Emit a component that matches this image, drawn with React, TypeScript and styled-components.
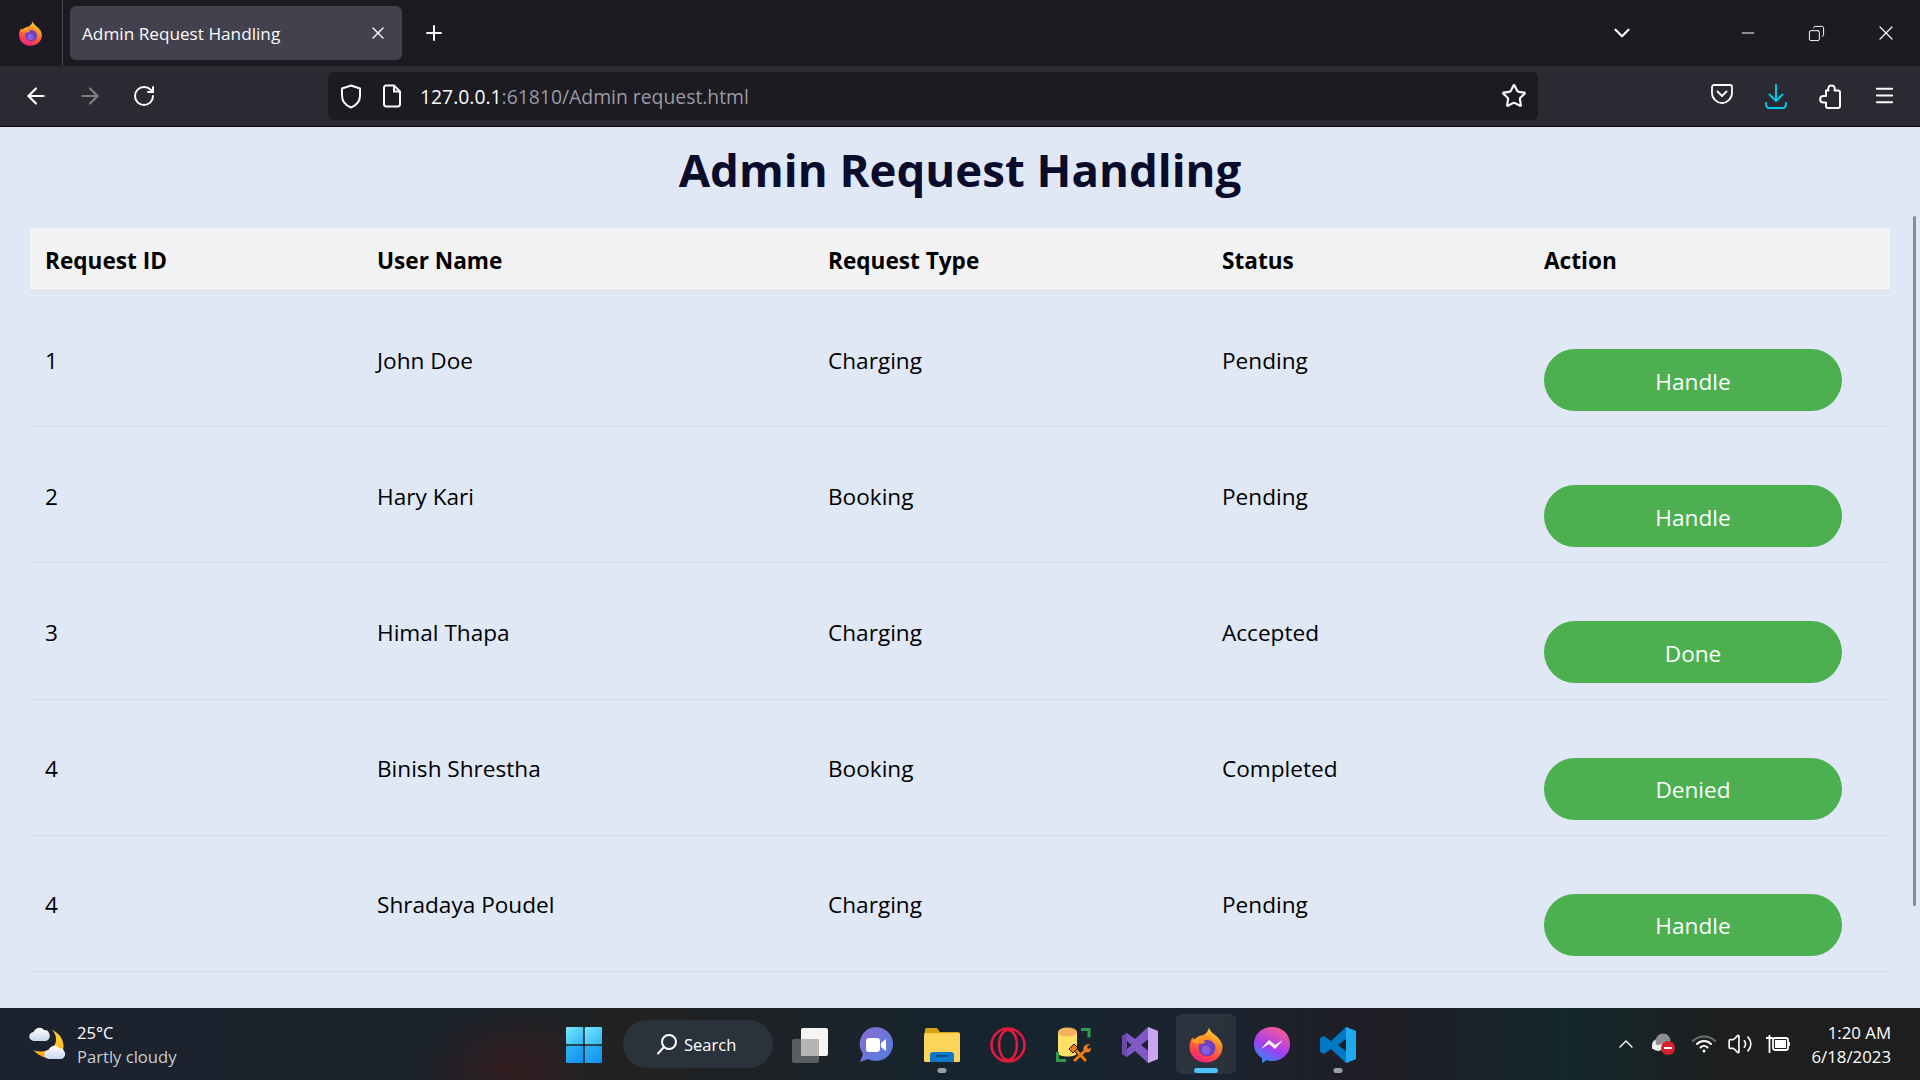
import React from 'react';
import styled, { createGlobalStyle } from 'styled-components';
import {
  ArrowLeft,
  ArrowRight,
  ChevronDown,
  ChevronUp,
  Copy,
  Menu,
  Minus,
  Plus,
  RotateCw,
  Star,
  Volume2,
  X,
} from 'lucide-react';

const GlobalStyle = createGlobalStyle`
  html, body {
    margin: 0;
    padding: 0;
    height: 100%;
    overflow: hidden;
    font-family: "Open Sans", "Noto Sans", sans-serif;
  }
  * { box-sizing: border-box; }
`;

const Screen = styled.div`
  width: 1920px;
  height: 1080px;
  display: flex;
  flex-direction: column;
  overflow: hidden;
  position: relative;
`;

/* browser chrome */
const TabBar = styled.div`
  height: 66px;
  background: #1c1b22;
  display: flex;
  align-items: center;
  color: #fbfbfe;
`;

const FoxSlot = styled.div`
  width: 63px;
  height: 66px;
  display: flex;
  align-items: center;
  padding-left: 18px;
  border-right: 1px solid #4a4a52;
`;

const Tab = styled.div`
  width: 332px;
  height: 54px;
  margin-left: 7px;
  background: #42414d;
  border-radius: 6px;
  display: flex;
  align-items: center;
  justify-content: space-between;
  padding: 0 14px 0 12px;
  font-size: 17.2px;
`;

const NewTab = styled.div`
  width: 24px;
  margin-left: 20px;
  display: flex;
`;

const WindowControls = styled.div`
  margin-left: auto;
  display: flex;
  align-items: center;
`;

const ControlSlot = styled.div<{ $w: number; $ml?: number }>`
  width: ${p => p.$w}px;
  margin-left: ${p => p.$ml ?? 0}px;
  display: flex;
  justify-content: center;
`;

const RestoreIcon = styled(Copy)`
  transform: scaleX(-1);
`;

const NavBar = styled.div`
  height: 61px;
  background: #2b2a33;
  border-bottom: 1px solid #0c0c0d;
  display: flex;
  align-items: center;
  color: #fbfbfe;
  padding-left: 9px;
`;

const NavButton = styled.div<{ $dim?: boolean }>`
  width: 54px;
  display: flex;
  justify-content: center;
  opacity: ${p => (p.$dim ? 0.4 : 1)};
`;

const UrlBar = styled.div`
  width: 1210px;
  height: 48px;
  margin-left: 157px;
  background: #1c1b22;
  border-radius: 6px;
  display: flex;
  align-items: center;
  padding: 0 11px 0 12px;
`;

const UrlIcon = styled.div`
  display: flex;
  margin-right: 21px;
`;

const UrlText = styled.div`
  font-size: 19.35px;
  color: #fbfbfe;
  margin-left: -3px;
  flex: 1;
  span { color: #9a9aa2; }
`;

const ToolButtons = styled.div`
  display: flex;
  margin-left: 157px;
`;

/* page */
const Page = styled.main`
  flex: 1;
  background: #dfe8f4;
  padding: 0 30px;
  color: #000;
`;

const Title = styled.h1`
  margin: 0;
  height: 101px;
  padding-top: 9px;
  text-align: center;
  font-size: 45.6px;
  line-height: 66px;
  font-weight: 700;
  color: #0b0b2b;
`;

const HeaderRow = styled.div`
  display: grid;
  grid-template-columns: 332px 451px 394px 322px 1fr;
  height: 63px;
  padding-top: 2px;
  align-items: center;
  background: #f2f2f2;
  border-bottom: 1px solid #dcdcdc;
  font-size: 22.6px;
  font-weight: 700;
`;

const HeaderCell = styled.div`
  padding-left: 15px;
`;

const Row = styled.div`
  display: grid;
  grid-template-columns: 332px 451px 394px 322px 1fr;
  height: 136.2px;
  border-bottom: 1px solid #d9dde2;
  font-size: 22.6px;
`;

const Cell = styled.div`
  padding: 53.5px 0 0 15px;
  line-height: 32px;
`;

const ActionCell = styled.div`
  padding: 58px 0 0 15px;
`;

const ActionButton = styled.button`
  width: 298px;
  height: 62px;
  border: 0;
  border-radius: 31px;
  background: #4caf50;
  color: #fff;
  font: inherit;
  padding: 2px 0 0;
`;

const ScrollThumb = styled.div`
  position: absolute;
  right: 4px;
  top: 216px;
  width: 3px;
  height: 690px;
  border-radius: 2px;
  background: #8a8d93;
`;

/* taskbar */
const Taskbar = styled.footer`
  height: 72px;
  display: flex;
  align-items: center;
  color: #fff;
  background:
    radial-gradient(ellipse 90px 60px at 510px 60px, rgba(80, 25, 25, 0.45), transparent),
    linear-gradient(90deg, #1c2230 0%, #1b2229 25%, #222222 33%, #16242e 50%, #1a2430 62%, #1f1d25 72%, #14282b 82%, #1e1e1e 90%);
`;

const Weather = styled.div`
  width: 551px;
  display: flex;
  align-items: center;
  padding-left: 29px;
  gap: 10px;
`;

const WeatherText = styled.div`
  font-size: 16.6px;
  line-height: 24px;
  padding-top: 2px;
  div + div { color: #c9ccd0; }
`;

const Slot = styled.div<{ $active?: boolean }>`
  width: 60px;
  height: 60px;
  margin: 0 3px;
  padding-top: 2px;
  border-radius: 6px;
  display: flex;
  align-items: center;
  justify-content: center;
  position: relative;
  background: ${p => (p.$active ? 'rgba(255,255,255,0.07)' : 'transparent')};
`;

const RunDot = styled.div<{ $active?: boolean }>`
  position: absolute;
  bottom: 1px;
  left: 50%;
  transform: translateX(-50%);
  width: ${p => (p.$active ? 24 : 9)}px;
  height: 5px;
  border-radius: 3px;
  background: ${p => (p.$active ? '#4cc2ff' : '#9b9ea3')};
`;

const SearchPill = styled.div`
  width: 150px;
  height: 48px;
  margin: 0 4px 0 6px;
  border-radius: 24px;
  background: #2a323c;
  display: flex;
  align-items: center;
  padding-left: 33px;
  gap: 6px;
  font-size: 16.5px;
`;

const Tray = styled.div`
  margin-left: auto;
  display: flex;
  align-items: center;
  padding-right: 29px;
`;

const TrayIcon = styled.div<{ $w: number }>`
  width: ${p => p.$w}px;
  display: flex;
  justify-content: center;
`;

const Clock = styled.div`
  margin-left: 10px;
  padding-top: 1px;
  text-align: right;
  font-size: 16.8px;
  line-height: 24px;
`;

const FirefoxLogo = ({ size }: { size: number }) => (
  <svg width={size} height={size} viewBox="0 0 36 36">
    <defs>
      <linearGradient id={`ffBody${size}`} x1="0.75" y1="0" x2="0.35" y2="1">
        <stop offset="0" stopColor="#ffd93b" />
        <stop offset="0.4" stopColor="#ff8a24" />
        <stop offset="0.8" stopColor="#ff3d4f" />
        <stop offset="1" stopColor="#f0218a" />
      </linearGradient>
      <linearGradient id={`ffTail${size}`} x1="0" y1="0" x2="1" y2="0.5">
        <stop offset="0" stopColor="#ffb52e" />
        <stop offset="1" stopColor="#ff7a1e" />
      </linearGradient>
    </defs>
    <path
      d="M21 0.500c.5 3 3 5 6 7.500 4.500 3.500 7.500 8 7.500 12 0 9-7.500 15.500-16.500 15.500S1.500 29 1.500 20c0-3.500 1-7 3-9.500 1 .5 1.500 1.500 2 2.500 1.500-2.500 4-4 6.500-4.500C17 8 20 5 21 .5z"
      fill={`url(#ffBody${size})`}
    />
    <circle cx="19" cy="21" r="8.500" fill="#6a3fc0" />
    <circle cx="18" cy="23" r="4.500" fill="#8d5be0" />
    <path
      d="M3.500 14c3-1 6-4.500 10-5 5-.5 11 1.500 13.500 8-3-3.500-8-5-12-3 1 0 2 .5 2.500 1.500-2.500 1.500-5 1.500-7 .5-2 1-4 .5-7-2z"
      fill={`url(#ffTail${size})`}
    />
  </svg>
);

const Shield = () => (
  <svg width="22" height="25" viewBox="0 0 22 25" fill="none" stroke="#fbfbfe" strokeWidth="2">
    <path d="M11 1.500l9 3v7c0 6-4 10-9 12-5-2-9-6-9-12v-7z" />
  </svg>
);

const PageIcon = () => (
  <svg width="19" height="24" viewBox="0 0 19 24" fill="none" stroke="#fbfbfe" strokeWidth="2">
    <path d="M3 1.500h8l6 6V20a2.500 2.500 0 0 1-2.500 2.500h-11A2.500 2.500 0 0 1 1 20V3.500a2 2 0 0 1 2-2z" />
    <path d="M11 1.500v6h6" />
  </svg>
);

const Pocket = () => (
  <svg width="22" height="20" viewBox="0 0 22 20" fill="none" stroke="#fbfbfe" strokeWidth="1.800" strokeLinecap="round" strokeLinejoin="round">
    <path d="M3 1h16a2 2 0 0 1 2 2v6c0 5.500-5 10-10 10S1 14.500 1 9V3a2 2 0 0 1 2-2z" />
    <path d="M6.500 7.500L11 12l4.500-4.500" />
  </svg>
);

const DownloadIcon = () => (
  <svg width="22" height="25" viewBox="0 0 22 25" fill="none" stroke="#00c8e8" strokeWidth="2" strokeLinecap="round" strokeLinejoin="round">
    <path d="M11 1v15M4.500 10.500L11 17l6.500-6.500" />
    <path d="M1 19c0 3 1 5 3 5h14c2 0 3-2 3-5" />
  </svg>
);

const PuzzleIcon = () => (
  <svg width="22" height="25" viewBox="0 0 22 25" fill="none" stroke="#fbfbfe" strokeWidth="2" strokeLinejoin="round">
    <path d="M7 6.500h2.500c-.5-1-.5-2 0-3.200.8-2.400 5.200-2.400 6 0 .4 1.200.4 2.200 0 3.200H19a2 2 0 0 1 2 2V22a2 2 0 0 1-2 2H9a2 2 0 0 1-2-2v-3.500H4.500c-4.500 0-4.500-6.500 0-6.500H7z" />
  </svg>
);

const WeatherIcon = () => (
  <svg width="38" height="34" viewBox="0 0 38 34">
    <defs>
      <linearGradient id="moon" x1="0.8" y1="0" x2="0.2" y2="1">
        <stop offset="0" stopColor="#ffd23a" />
        <stop offset="1" stopColor="#f7a50c" />
      </linearGradient>
      <linearGradient id="cloud" x1="0" y1="0" x2="0" y2="1">
        <stop offset="0" stopColor="#ffffff" />
        <stop offset="1" stopColor="#c8d6ee" />
      </linearGradient>
    </defs>
    <path d="M23 3c9 4 13 12 11 20-2 8-16 14-30 0 10 4 22-1 23-9 .3-5-1-8-4-11z" fill="url(#moon)" />
    <path d="M5 14a4.500 4.500 0 0 1-.5-9C6 1 12 -1 15 3c3 0 4.500 1 5 3 1.500 2 1 7-3 8z" fill="url(#cloud)" />
    <path d="M20 32a4.500 4.500 0 0 1-.5-9c1.500-4 7.500-6 10.500-2 3 0 4.500 1 5 3 2 2 1.500 7-2.500 8z" fill="url(#cloud)" />
  </svg>
);

const WindowsLogo = () => (
  <svg width="36" height="36" viewBox="0 0 36 36">
    <defs>
      <linearGradient id="winTop" x1="0" y1="0" x2="1" y2="1">
        <stop offset="0" stopColor="#7ce8ff" />
        <stop offset="1" stopColor="#2eb4f5" />
      </linearGradient>
      <linearGradient id="winBottom" x1="0" y1="0" x2="1" y2="1">
        <stop offset="0" stopColor="#2fb6f5" />
        <stop offset="1" stopColor="#0f8ff0" />
      </linearGradient>
    </defs>
    <rect x="0" y="0" width="17.300" height="17.300" rx="1" fill="url(#winTop)" />
    <rect x="18.700" y="0" width="17.300" height="17.300" rx="1" fill="url(#winTop)" />
    <rect x="0" y="18.700" width="17.300" height="17.300" rx="1" fill="url(#winBottom)" />
    <rect x="18.700" y="18.700" width="17.300" height="17.300" rx="1" fill="url(#winBottom)" />
  </svg>
);

const SearchGlass = () => (
  <svg width="22" height="22" viewBox="0 0 22 22" fill="none" stroke="#fff" strokeWidth="2" strokeLinecap="round">
    <circle cx="13" cy="9" r="7" />
    <path d="M8 14l-6 6.500" />
  </svg>
);

const TaskView = () => (
  <svg width="37" height="35" viewBox="0 0 37 35">
    <rect x="0" y="11" width="27" height="24" rx="2" fill="#5c5d5f" />
    <rect x="9" y="0" width="27" height="28" rx="2" fill="#f4f4f4" />
    <rect x="9" y="11" width="18" height="17" fill="#b5b5b5" />
  </svg>
);

const TeamsIcon = () => (
  <svg width="34" height="36" viewBox="0 0 34 36">
    <defs>
      <linearGradient id="teams" x1="0" y1="0" x2="1" y2="1">
        <stop offset="0" stopColor="#8a6cd4" />
        <stop offset="1" stopColor="#4f7fe0" />
      </linearGradient>
    </defs>
    <path d="M17 0a17 17 0 1 1-8 32l-8 3 3-8A17 17 0 0 1 17 0z" fill="url(#teams)" />
    <rect x="7" y="11" width="14" height="14" rx="3" fill="#fff" />
    <path d="M22 16l5-4v12l-5-4z" fill="#fff" />
  </svg>
);

const FolderIcon = () => (
  <svg width="36" height="34" viewBox="0 0 36 34">
    <path d="M1 2a2 2 0 0 1 2-2h10l3 4h18a2 2 0 0 1 2 2v6H0z" fill="#d9a011" />
    <rect x="0" y="5" width="36" height="29" rx="1.500" fill="#fdd55b" />
    <path d="M6 34v-7a3 3 0 0 1 3-3h18a3 3 0 0 1 3 3v7z" fill="#0f78c8" />
    <rect x="12" y="27" width="12" height="2" fill="#0a4f8c" />
  </svg>
);

const OperaIcon = () => (
  <svg width="36" height="36" viewBox="0 0 36 36" fill="none" stroke="#e8193f" strokeWidth="2.500">
    <circle cx="18" cy="18" r="16.500" />
    <ellipse cx="18" cy="18" rx="9" ry="15" />
  </svg>
);

const DbTool = () => (
  <svg width="36" height="36" viewBox="0 0 36 36" fill="none">
    <path d="M2 5v21c0 2 4 3.500 9.500 3.500S21 28 21 26V5z" fill="#ffe066" />
    <ellipse cx="11.500" cy="5" rx="9.500" ry="4.500" fill="#f3b25f" />
    <path d="M25 2.500h8v8M1.500 25v8.500H10" stroke="#2e9c4a" strokeWidth="3" />
    <path d="M18 21l12 13" stroke="#1a1208" strokeWidth="4.500" />
    <path d="M18 21l12 13M31 22L18 34" stroke="#ee7c14" strokeWidth="3" />
    <path d="M13 22l5-5 4 4-5 5z" fill="#ee7c14" stroke="#1a1208" strokeWidth="1" />
    <path d="M28 24c-2-3 0-7 6-7l-3 3 1 2 3-1c0 4-3 6-7 3z" fill="#ee7c14" />
  </svg>
);

const VisualStudio = () => (
  <svg width="36" height="36" viewBox="0 0 36 36">
    <path
      fillRule="evenodd"
      d="M26 0L36 4V32L26 36 13 24 5 30 0 27V9L5 6 13 12zM5 14v8l4.500-4zM19 18l7 5.500v-11z"
      fill="#8058c4"
    />
    <path d="M0 9l5-3v24l-5-3z" fill="#6c4aa8" />
    <path d="M26 0l10 4v28l-10 4V23.500 12.500z" fill="#c9a4ef" />
  </svg>
);

const Messenger = () => (
  <svg width="36" height="36" viewBox="0 0 36 36">
    <defs>
      <linearGradient id="msg" x1="0.3" y1="1" x2="0.8" y2="0">
        <stop offset="0" stopColor="#2f8cf5" />
        <stop offset="0.4" stopColor="#a23df0" />
        <stop offset="1" stopColor="#ff5f90" />
      </linearGradient>
    </defs>
    <path d="M18 0c10 0 18 7 18 17s-8 17-18 17c-2 0-3 0-5-1l-5 3v-5C3 28 0 23 0 17 0 7 8 0 18 0z" fill="url(#msg)" />
    <path d="M7 22l8-9 6 5 8-5-8 9-6-5z" fill="#fff" />
  </svg>
);

const VsCode = () => (
  <svg width="36" height="36" viewBox="0 0 36 36">
    <path
      fillRule="evenodd"
      d="M26 0L36 4V32L26 36 11 22 4 27 0 25V11L4 9 11 14zM18 18l8 6V12z"
      fill="#0078c4"
    />
    <path d="M26 0l10 4v28l-10 4V24 12z" fill="#1faaf0" />
  </svg>
);

const OneDriveOff = () => (
  <svg width="26" height="24" viewBox="0 0 26 24">
    <circle cx="8" cy="13" r="6" fill="#e8e8e8" />
    <circle cx="13" cy="9" r="7.500" fill="#8e8e8e" />
    <path d="M2 17h16v-6L2 14z" fill="#f0f0f0" />
    <circle cx="18" cy="16" r="7" fill="#d9202f" />
    <rect x="14" y="15" width="8" height="2" fill="#fff" />
  </svg>
);

const Wifi = () => (
  <svg width="24" height="20" viewBox="0 0 24 20" fill="none" stroke="#fff" strokeWidth="2" strokeLinecap="round">
    <path d="M1 7c6-6 16-6 22 0" stroke="#6e7070" />
    <path d="M5 10c4-4 10-4 14 0" />
    <path d="M8.500 13.500c2-2 5-2 7 0" />
    <circle cx="12" cy="17" r="1.500" fill="#fff" stroke="none" />
  </svg>
);

const BatteryPlug = () => (
  <svg width="26" height="20" viewBox="0 0 26 20" fill="none" stroke="#fff" strokeWidth="1.800">
    <rect x="8" y="4" width="15" height="12" rx="2" />
    <rect x="10" y="6" width="11" height="8" fill="#fff" stroke="none" />
    <path d="M24 8v4" />
    <path d="M1 4h7M4.500 1v6M4.500 7v12" />
  </svg>
);

const requests = [
  { id: 1, user: 'John Doe', type: 'Charging', status: 'Pending', action: 'Handle' },
  { id: 2, user: 'Hary Kari', type: 'Booking', status: 'Pending', action: 'Handle' },
  { id: 3, user: 'Himal Thapa', type: 'Charging', status: 'Accepted', action: 'Done' },
  { id: 4, user: 'Binish Shrestha', type: 'Booking', status: 'Completed', action: 'Denied' },
  { id: 4, user: 'Shradaya Poudel', type: 'Charging', status: 'Pending', action: 'Handle' },
];

const App: React.FC = () => (
  <Screen>
    <GlobalStyle />
    <TabBar>
      <FoxSlot>
        <FirefoxLogo size={25} />
      </FoxSlot>
      <Tab>
        Admin Request Handling
        <X size={20} strokeWidth={1.6} />
      </Tab>
      <NewTab>
        <Plus size={24} strokeWidth={2} />
      </NewTab>
      <WindowControls>
        <ControlSlot $w={100}>
          <ChevronDown size={26} strokeWidth={2} />
        </ControlSlot>
        <ControlSlot $w={69} $ml={41}>
          <Minus size={20} strokeWidth={1.2} />
        </ControlSlot>
        <ControlSlot $w={69}>
          <RestoreIcon size={17} strokeWidth={1.4} />
        </ControlSlot>
        <ControlSlot $w={69}>
          <X size={24} strokeWidth={1.2} />
        </ControlSlot>
      </WindowControls>
    </TabBar>
    <NavBar>
      <NavButton>
        <ArrowLeft size={26} strokeWidth={2} />
      </NavButton>
      <NavButton $dim>
        <ArrowRight size={26} strokeWidth={2} />
      </NavButton>
      <NavButton>
        <RotateCw size={24} strokeWidth={2} />
      </NavButton>
      <UrlBar>
        <UrlIcon>
          <Shield />
        </UrlIcon>
        <UrlIcon>
          <PageIcon />
        </UrlIcon>
        <UrlText>
          127.0.0.1<span>:61810/Admin request.html</span>
        </UrlText>
        <Star size={26} strokeWidth={2} color="#fbfbfe" />
      </UrlBar>
      <ToolButtons>
        <NavButton>
          <Pocket />
        </NavButton>
        <NavButton>
          <DownloadIcon />
        </NavButton>
        <NavButton>
          <PuzzleIcon />
        </NavButton>
        <NavButton>
          <Menu size={23} strokeWidth={2} />
        </NavButton>
      </ToolButtons>
    </NavBar>
    <Page>
      <Title>Admin Request Handling</Title>
      <HeaderRow>
        <HeaderCell>Request ID</HeaderCell>
        <HeaderCell>User Name</HeaderCell>
        <HeaderCell>Request Type</HeaderCell>
        <HeaderCell>Status</HeaderCell>
        <HeaderCell>Action</HeaderCell>
      </HeaderRow>
      {requests.map(r => (
        <Row key={r.user}>
          <Cell>{r.id}</Cell>
          <Cell>{r.user}</Cell>
          <Cell>{r.type}</Cell>
          <Cell>{r.status}</Cell>
          <ActionCell>
            <ActionButton>{r.action}</ActionButton>
          </ActionCell>
        </Row>
      ))}
    </Page>
    <ScrollThumb />
    <Taskbar>
      <Weather>
        <WeatherIcon />
        <WeatherText>
          <div>25°C</div>
          <div>Partly cloudy</div>
        </WeatherText>
      </Weather>
      <Slot>
        <WindowsLogo />
      </Slot>
      <SearchPill>
        <SearchGlass />
        Search
      </SearchPill>
      <Slot>
        <TaskView />
      </Slot>
      <Slot>
        <TeamsIcon />
      </Slot>
      <Slot>
        <FolderIcon />
        <RunDot />
      </Slot>
      <Slot>
        <OperaIcon />
      </Slot>
      <Slot>
        <DbTool />
      </Slot>
      <Slot>
        <VisualStudio />
      </Slot>
      <Slot $active>
        <FirefoxLogo size={36} />
        <RunDot $active />
      </Slot>
      <Slot>
        <Messenger />
      </Slot>
      <Slot>
        <VsCode />
        <RunDot />
      </Slot>
      <Tray>
        <TrayIcon $w={36}>
          <ChevronUp size={24} strokeWidth={1.4} />
        </TrayIcon>
        <TrayIcon $w={38}>
          <OneDriveOff />
        </TrayIcon>
        <TrayIcon $w={44}>
          <Wifi />
        </TrayIcon>
        <TrayIcon $w={28}>
          <Volume2 size={26} strokeWidth={1.5} />
        </TrayIcon>
        <TrayIcon $w={48}>
          <BatteryPlug />
        </TrayIcon>
        <Clock>
          <div>1:20 AM</div>
          <div>6/18/2023</div>
        </Clock>
      </Tray>
    </Taskbar>
  </Screen>
);

export default App;
